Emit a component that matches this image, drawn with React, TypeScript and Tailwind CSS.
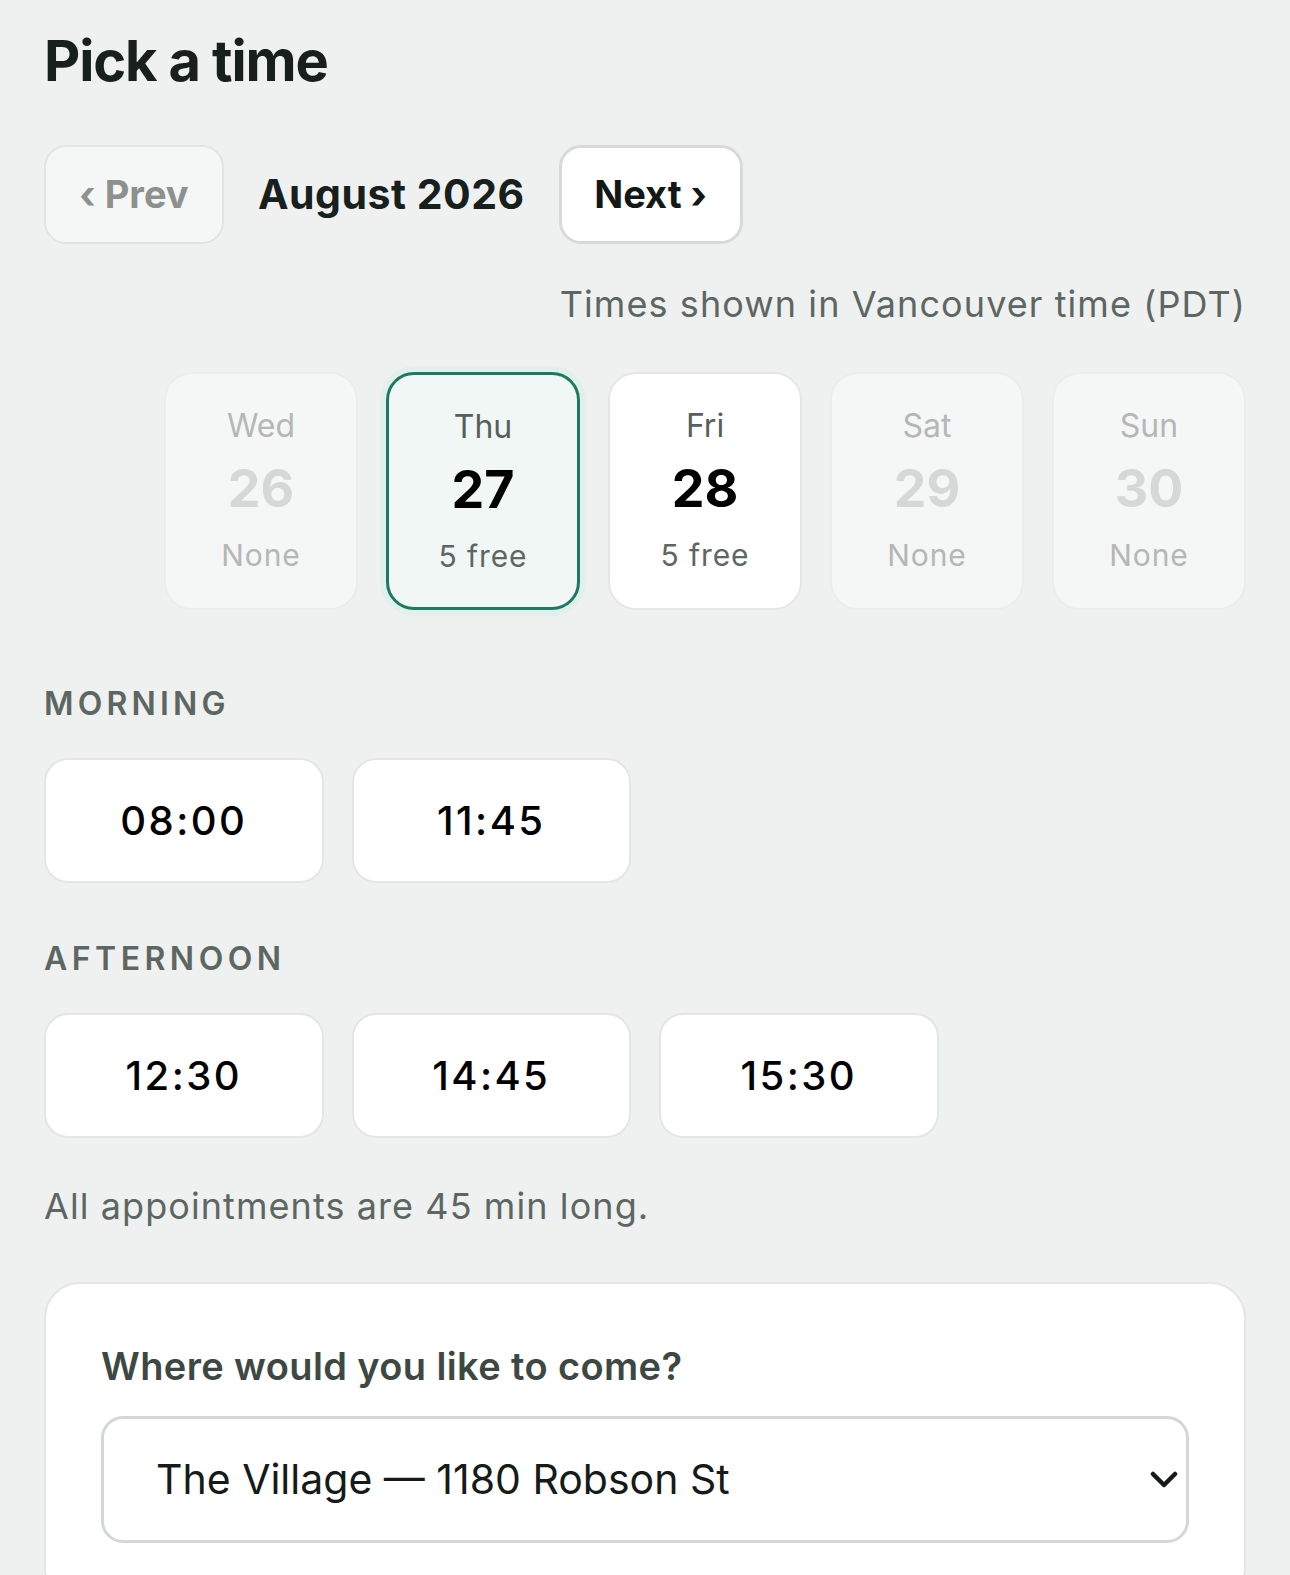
import React from 'react';

type Day = { name: string; num: number; label: string; state: 'off' | 'selected' | 'open' };

const days: Day[] = [
  { name: 'Wed', num: 26, label: 'None', state: 'off' },
  { name: 'Thu', num: 27, label: '5 free', state: 'selected' },
  { name: 'Fri', num: 28, label: '5 free', state: 'open' },
  { name: 'Sat', num: 29, label: 'None', state: 'off' },
  { name: 'Sun', num: 30, label: 'None', state: 'off' },
];

const DayCard: React.FC<{ day: Day }> = ({ day }) => {
  const box =
    day.state === 'selected'
      ? 'bg-[#f1f7f5] border-[3px] border-[#1d7a62] shadow-[0_0_0_6px_#e2f0eb]'
      : day.state === 'open'
        ? 'bg-white border-2 border-[#e4e7e5]'
        : 'bg-[#f5f7f6] border-2 border-[#eaedeb]';
  const off = day.state === 'off';
  return (
    <div className={`w-[194px] h-[238px] rounded-[28px] flex flex-col items-center pt-[32px] ${box}`}>
      <div className={`text-[32px] leading-[40px] ${off ? 'text-[#b3b7b5]' : 'text-[#55605b]'}`}>{day.name}</div>
      <div className={`mt-[11px] text-[52px] leading-[64px] font-bold ${off ? 'text-[#d5d8d6]' : 'text-black'}`}>{day.num}</div>
      <div className={`mt-[16px] text-[30px] leading-[36px] tracking-[0.03em] ${off ? 'text-[#b3b7b5]' : 'text-[#5c6762]'}`}>{day.label}</div>
    </div>
  );
};

const Slot: React.FC<{ time: string }> = ({ time }) => (
  <button className="h-[125px] rounded-[24px] bg-white border-2 border-[#e3e6e4] text-[40px] font-medium tracking-[0.06em] text-black">
    {time}
  </button>
);

export default function App() {
  return (
    <div className="min-h-[1575px] bg-[#eff1f0] px-[44px] pt-[27px] font-['Inter','Liberation_Sans',sans-serif] text-[#17201c] overflow-hidden">
      <h1 className="text-[56px] leading-[68px] font-bold tracking-[-0.02em] text-[#17201c]">Pick a time</h1>

      {/* month nav */}
      <div className="mt-[50px] flex items-center gap-[34px]">
        <button className="w-[180px] h-[99px] rounded-[22px] bg-[#f5f7f6] border-2 border-[#e0e4e2] text-[38px] font-bold text-[#8c918e]">
          ‹ Prev
        </button>
        <div className="text-[41px] font-bold tracking-[0.012em] text-[#17201c]">August 2026</div>
        <button className="w-[184px] h-[99px] rounded-[22px] bg-white border-[3px] border-[#d6dbd9] text-[38px] font-bold text-[#111815]">
          Next ›
        </button>
      </div>

      <div className="mt-[36px] text-right text-[36px] leading-[48px] tracking-[0.03em] text-[#5c6762]">
        Times shown in Vancouver time (PDT)
      </div>

      <div className="mt-[44px] flex justify-end gap-[28px]">
        {days.map((d) => (
          <DayCard key={d.num} day={d} />
        ))}
      </div>

      <div className="mt-[72px] text-[32px] leading-[44px] font-semibold tracking-[0.13em] text-[#5c6762]">MORNING</div>
      <div className="mt-[32px] grid grid-cols-4 gap-[28px]">
        <Slot time="08:00" />
        <Slot time="11:45" />
      </div>

      <div className="mt-[54px] text-[32px] leading-[44px] font-semibold tracking-[0.14em] text-[#5c6762]">AFTERNOON</div>
      <div className="mt-[32px] grid grid-cols-4 gap-[28px]">
        <Slot time="12:30" />
        <Slot time="14:45" />
        <Slot time="15:30" />
      </div>

      <p className="mt-[44px] text-[36px] leading-[48px] tracking-[0.03em] text-[#5c6762]">All appointments are 45 min long.</p>

      <div className="mt-[52px] rounded-[36px] bg-white border-2 border-[#e3e6e4] px-[55px] pt-[58px] pb-[60px]">
        <div className="text-[38px] leading-[48px] font-semibold tracking-[0.01em] text-[#3d4843]">Where would you like to come?</div>
        <div className="mt-[26px] h-[127px] rounded-[22px] border-[3px] border-[#d3d8d6] bg-white flex items-center justify-between pl-[52px] pr-[8px]">
          <span className="text-[41px] text-[#151b18]">The Village — 1180 Robson St</span>
          <svg width="28" height="20" viewBox="0 0 28 20" fill="none">
            <path d="M3 4 L14 15 L25 4" stroke="#151b18" strokeWidth="4.5" strokeLinecap="round" strokeLinejoin="round" />
          </svg>
        </div>
      </div>
    </div>
  );
}
